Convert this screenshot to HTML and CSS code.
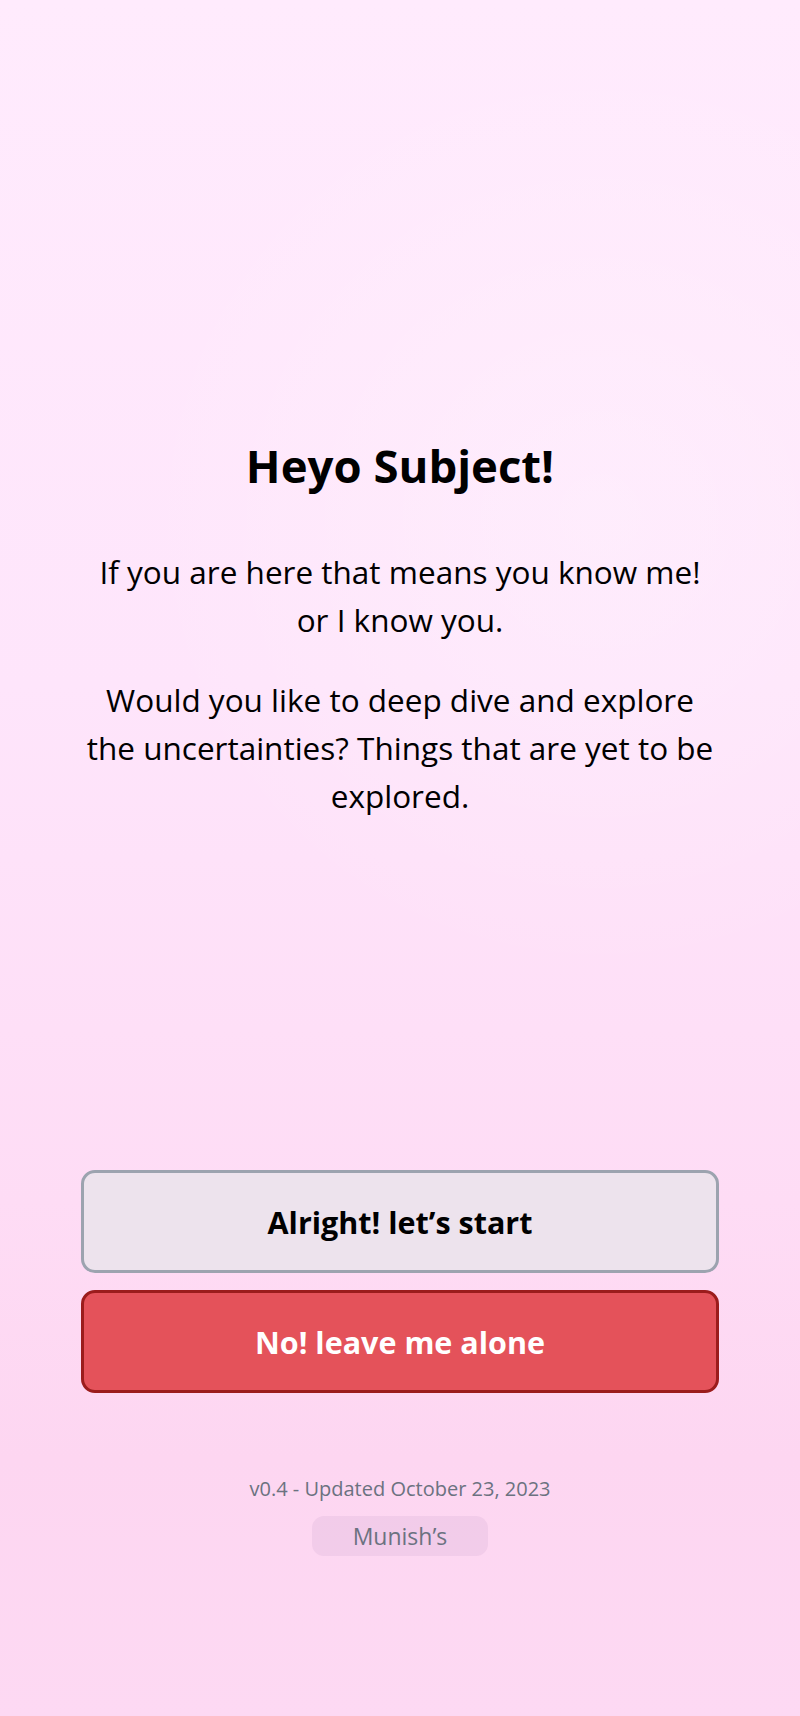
FILE: index.html
```html
<!DOCTYPE html>
<html lang="en">
<head>
<meta charset="utf-8">
<title>Heyo Subject!</title>
<link rel="stylesheet" href="styles.css">
</head>
<body>
<main class="page">
  <section class="intro">
    <h1 class="title">Heyo Subject!</h1>
    <p class="text">If you are here that means you know me!<br>or I know you.</p>
    <p class="text">Would you like to deep dive and explore the uncertainties? Things that are yet to be explored.</p>
  </section>
  <section class="actions">
    <button class="btn btn-start">Alright! let’s start</button>
    <button class="btn btn-leave">No! leave me alone</button>
  </section>
  <footer class="footer">
    <div class="version">v0.4 - Updated October 23, 2023</div>
    <div class="badge">Munish’s</div>
  </footer>
</main>
</body>
</html>
```

FILE: styles.css
```css
html, body {
  margin: 0;
  padding: 0;
}
body {
  min-height: 1716px;
  font-family: "Open Sans", "Noto Sans", sans-serif;
  color: #000;
  background:
    radial-gradient(circle at 75% 30%, rgba(255,255,255,0.25) 0, rgba(255,255,255,0) 35%),
    linear-gradient(180deg, #ffebfd 0%, #fee5fb 40%, #fedcf5 70%, #fdd6f1 85%, #fdd9f3 100%);
}
.page {
  display: flex;
  flex-direction: column;
  align-items: center;
  padding: 437px 81px 0;
}
.intro {
  display: flex;
  flex-direction: column;
  align-items: center;
  text-align: center;
  width: 100%;
}
.title {
  margin: 0;
  font-size: 45.5px;
  line-height: 57px;
  font-weight: 700;
}
.text {
  margin: 0;
  font-size: 31.5px;
  line-height: 48px;
  font-weight: 400;
}
.title + .text {
  margin-top: 54px;
}
.text + .text {
  margin-top: 32px;
}
.actions {
  display: flex;
  flex-direction: column;
  gap: 17px;
  width: 100%;
  margin-top: 350px;
}
.btn {
  box-sizing: border-box;
  width: 100%;
  height: 103px;
  border-radius: 14px;
  border: 3px solid;
  font-family: inherit;
  font-size: 30.5px;
  font-weight: 700;
  cursor: pointer;
}
.btn-start {
  background: #ede3ed;
  border-color: #9ca3af;
  color: #000;
}
.btn-leave {
  background: #e4525a;
  border-color: #9b1c1c;
  color: #fff;
}
.footer {
  display: flex;
  flex-direction: column;
  align-items: center;
  margin-top: 84px;
  color: #6b7280;
}
.version {
  font-size: 20px;
  line-height: 24px;
}
.badge {
  margin-top: 15px;
  width: 176px;
  height: 40px;
  box-sizing: border-box;
  display: flex;
  align-items: center;
  justify-content: center;
  border-radius: 12px;
  background: rgba(219, 180, 215, 0.3);
  font-size: 23px;
}
```
